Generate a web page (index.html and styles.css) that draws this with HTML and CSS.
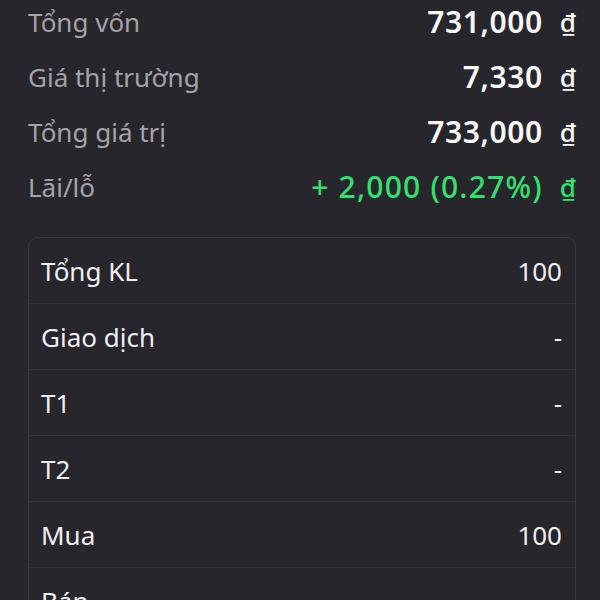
FILE: index.html
```html
<!DOCTYPE html>
<html lang="vi">
<head>
<meta charset="utf-8">
<link rel="stylesheet" href="styles.css">
</head>
<body>
<div class="page">
  <div class="summary">
    <div class="srow"><span class="slabel">Tổng vốn</span><span class="sval"><span class="num">731,000</span><span class="cur">₫</span></span></div>
    <div class="srow"><span class="slabel">Giá thị trường</span><span class="sval"><span class="num">7,330</span><span class="cur">₫</span></span></div>
    <div class="srow"><span class="slabel">Tổng giá trị</span><span class="sval"><span class="num">733,000</span><span class="cur">₫</span></span></div>
    <div class="srow"><span class="slabel">Lãi/lỗ</span><span class="sval up"><span class="num">+ 2,000 (0.27%)</span><span class="cur">₫</span></span></div>
  </div>
  <div class="card">
    <div class="crow"><span>Tổng KL</span><span>100</span></div>
    <div class="crow"><span>Giao dịch</span><span>-</span></div>
    <div class="crow"><span>T1</span><span>-</span></div>
    <div class="crow"><span>T2</span><span>-</span></div>
    <div class="crow"><span>Mua</span><span>100</span></div>
    <div class="crow"><span>Bán</span><span>-</span></div>
  </div>
</div>
</body>
</html>
```
FILE: styles.css
```css
html, body {
  margin: 0;
  padding: 0;
  background: #27262c;
  height: 100%;
  overflow: hidden;
}
body {
  font-family: "Noto Sans", "Liberation Sans", sans-serif;
  color: #f2f2f3;
}
.page {
  padding: 0 24px 0 28px;
}
.summary {
  margin-top: -6px;
}
.srow {
  display: flex;
  justify-content: space-between;
  align-items: center;
  height: 55px;
  font-size: 26px;
}
.slabel {
  color: #a4a3a8;
}
.sval {
  display: flex;
  align-items: center;
  gap: 17px;
  font-size: 30px;
  font-weight: 600;
  color: #f7f7f7;
}
.num {
  letter-spacing: 0.6px;
}
.sval.up {
  color: #33e070;
  font-weight: 500;
}
.sval.up .num {
  letter-spacing: 1.2px;
}
.cur {
  font-size: 26px;
  font-weight: 500;
}
.card {
  margin-top: 23px;
  border: 1px solid #3a393f;
  border-radius: 10px;
}
.crow {
  display: flex;
  justify-content: space-between;
  align-items: center;
  height: 65px;
  padding: 0 13px 0 12px;
  border-bottom: 1px solid #333238;
  font-size: 26px;
  color: #efeff0;
}
```
